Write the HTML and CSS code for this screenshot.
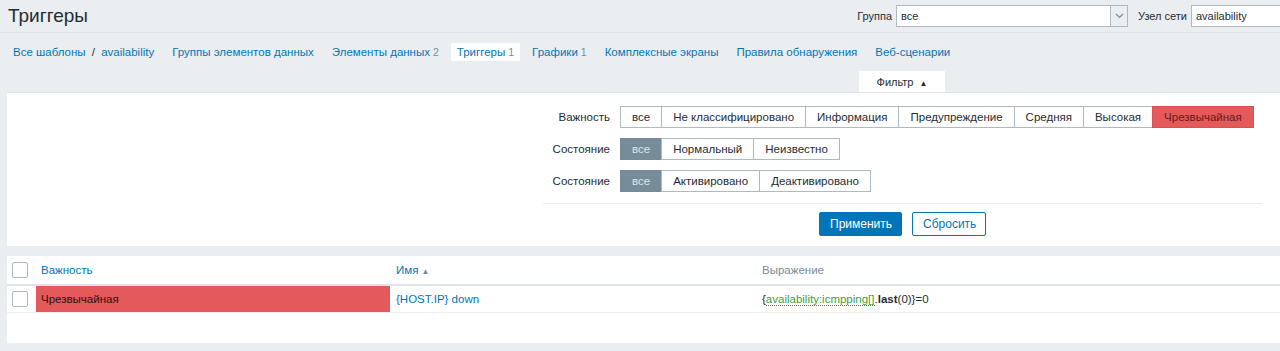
FILE: index.html
```html
<!DOCTYPE html>
<html lang="ru">
<head>
    <meta charset="UTF-8">
    <title>Триггеры</title>
    <link rel="stylesheet" href="styles.css">
</head>
<body>

<header class="page-header">
    <h1>Триггеры</h1>
    <div class="header-filter">
        <label>Группа</label>
        <div class="select">
            <span>все</span>
            <span class="select-arrow">
                <svg width="9" height="6" viewBox="0 0 9 6"><path d="M1 1l3.5 3.5L8 1" fill="none" stroke="#768d99" stroke-width="1.2"/></svg>
            </span>
        </div>
        <label>Узел сети</label>
        <div class="text-input">availability</div>
    </div>
</header>

<nav class="object-nav">
    <span class="crumbs"><a href="#">Все шаблоны</a> <span class="sep">/</span> <a href="#">availability</a></span>
    <a href="#">Группы элементов данных</a>
    <a href="#">Элементы данных<sup>2</sup></a>
    <a href="#" class="selected">Триггеры<sup>1</sup></a>
    <a href="#">Графики<sup>1</sup></a>
    <a href="#">Комплексные экраны</a>
    <a href="#">Правила обнаружения</a>
    <a href="#">Веб-сценарии</a>
</nav>

<div class="filter-tabs">
    <span class="filter-tab">Фильтр <span class="arrow">&#9650;</span></span>
</div>

<div class="filter-panel">
    <div class="filter-column">
        <div class="filter-row">
            <span class="row-label">Важность</span>
            <div class="segments">
                <span>все</span>
                <span>Не классифицировано</span>
                <span>Информация</span>
                <span>Предупреждение</span>
                <span>Средняя</span>
                <span>Высокая</span>
                <span class="disaster">Чрезвычайная</span>
            </div>
        </div>
        <div class="filter-row">
            <span class="row-label">Состояние</span>
            <div class="segments">
                <span class="active">все</span>
                <span>Нормальный</span>
                <span>Неизвестно</span>
            </div>
        </div>
        <div class="filter-row">
            <span class="row-label">Состояние</span>
            <div class="segments">
                <span class="active">все</span>
                <span>Активировано</span>
                <span>Деактивировано</span>
            </div>
        </div>
        <div class="filter-buttons">
            <button class="btn-apply">Применить</button>
            <button class="btn-reset">Сбросить</button>
        </div>
    </div>
</div>

<div class="list-wrap">
    <table class="list-table">
        <thead>
            <tr>
                <th class="cell-check"><span class="checkbox"></span></th>
                <th class="cell-severity"><a href="#">Важность</a></th>
                <th class="cell-name"><a href="#">Имя</a> <span class="sort">&#9650;</span></th>
                <th class="cell-expr">Выражение</th>
            </tr>
        </thead>
        <tbody>
            <tr>
                <td class="cell-check"><span class="checkbox"></span></td>
                <td class="cell-severity disaster-cell">Чрезвычайная</td>
                <td class="cell-name"><a href="#">{HOST.IP} down</a></td>
                <td class="cell-expr">{<span class="item-key">availability:icmpping[]</span>.<b>last</b>(0)}=0</td>
            </tr>
        </tbody>
    </table>
    <div class="list-footer"></div>
</div>

</body>
</html>
```

FILE: styles.css
```css
body {
    margin: 0;
    background-color: #ebeef0;
    font-family: "Liberation Sans", Arial, sans-serif;
    font-size: 11.5px;
    color: #1f2c33;
    overflow: hidden;
}
a {
    color: #0275b8;
    text-decoration: none;
}

/* header */
.page-header {
    display: flex;
    justify-content: space-between;
    align-items: center;
    height: 32px;
    padding-left: 8px;
    border-bottom: 1px solid #dfe4e7;
}
.page-header h1 {
    margin: 0;
    font-size: 19px;
    font-weight: normal;
    color: #1f2c33;
}
.header-filter {
    display: flex;
    align-items: center;
    margin-right: -20px;
    font-size: 11px;
}
.header-filter label {
    margin-right: 4px;
}
.select {
    display: flex;
    justify-content: space-between;
    align-items: center;
    width: 230px;
    height: 20px;
    margin-right: 10px;
    background: white;
    border: 1px solid #acbbc2;
}
.select span:first-child {
    padding-left: 4px;
}
.select-arrow {
    display: flex;
    align-items: center;
    justify-content: center;
    width: 16px;
    height: 20px;
    background: #ebeef0;
    border-left: 1px solid #acbbc2;
}
.text-input {
    width: 103px;
    height: 20px;
    line-height: 20px;
    padding-left: 4px;
    background: white;
    border: 1px solid #acbbc2;
}

/* object navigation */
.object-nav {
    display: flex;
    align-items: center;
    gap: 18px;
    height: 38px;
    padding-left: 13px;
}
.object-nav a {
    white-space: nowrap;
}
.object-nav .sep {
    color: #1f2c33;
    margin: 0 3px;
}
.object-nav sup {
    vertical-align: baseline;
    font-size: 10.5px;
    color: #768d99;
    margin-left: 3px;
}
.object-nav a.selected {
    background: white;
    padding: 3px 6px;
    margin: 0 -6px;
}

/* filter */
.filter-tabs {
    display: flex;
    justify-content: flex-end;
    padding-right: 335px;
}
.filter-tab {
    width: 86px;
    height: 21px;
    line-height: 22px;
    text-align: center;
    background: white;
    font-size: 11px;
}
.filter-tab .arrow {
    font-size: 8px;
    margin-left: 3px;
}
.filter-panel {
    margin-left: 7px;
    background: white;
    border-top: 1px solid #dfe4e7;
    padding: 13px 0 10px 536px;
}
.filter-column {
    width: 719px;
}
.filter-row {
    display: flex;
    align-items: center;
    margin-bottom: 10px;
}
.row-label {
    width: 67px;
    margin-right: 10px;
    text-align: right;
}
.segments {
    display: flex;
}
.segments span {
    height: 20px;
    line-height: 20px;
    padding: 0 11px;
    border: 1px solid #acbbc2;
    margin-left: -1px;
    background: white;
}
.segments span:first-child {
    margin-left: 0;
}
.segments span.active {
    background: #768d99;
    border-color: #768d99;
    color: #dfe4e7;
}
.segments span.disaster {
    background: #e45959;
    border-color: #d95151;
    color: #6b1a1a;
}
.filter-buttons {
    display: flex;
    justify-content: center;
    gap: 10px;
    margin-top: 11px;
    padding-top: 8px;
    border-top: 1px solid #ebeef0;
}
.filter-buttons button {
    height: 24px;
    padding: 0 10px;
    font-family: inherit;
    font-size: 12px;
    border-radius: 2px;
    cursor: pointer;
}
.btn-apply {
    background: #0275b8;
    border: 1px solid #0275b8;
    color: white;
    width: 83px;
}
.btn-reset {
    background: white;
    border: 1px solid #0275b8;
    color: #0275b8;
    width: 74px;
}

/* list */
.list-wrap {
    margin: 10px 0 0 7px;
    background: white;
}
.list-table {
    width: 100%;
    border-collapse: collapse;
}
.list-table th {
    height: 28px;
    text-align: left;
    font-weight: normal;
    border-bottom: 2px solid #dfe4e7;
    padding: 0 5px;
}
.list-table th.cell-expr {
    color: #768d99;
}
.list-table td {
    height: 26px;
    padding: 0 5px;
    border-bottom: 1px solid #ebeef0;
}
.list-table .cell-check {
    width: 24px;
    padding: 0 0 0 5px;
}
.list-table .cell-severity {
    width: 344px;
}
.list-table .cell-name {
    width: 357px;
    padding-left: 6px;
}
.list-table .cell-expr {
    padding-left: 4px;
}
.sort {
    font-size: 8px;
    color: #768d99;
}
.checkbox {
    display: block;
    width: 14px;
    height: 14px;
    border: 1px solid #acbbc2;
    border-radius: 2px;
    background: white;
}
.disaster-cell {
    background: #e45959;
    color: #2f1212;
}
.item-key {
    color: #429e47;
    border-bottom: 1px dotted #429e47;
}
.list-footer {
    height: 30px;
}
```
